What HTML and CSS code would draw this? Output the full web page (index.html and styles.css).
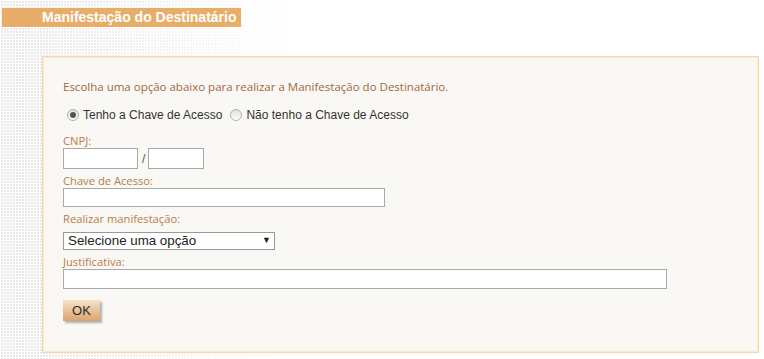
FILE: index.html
```html
<!DOCTYPE HTML><html>
<head>
  <title>Manifestação do Destinatário</title>
  <meta charset="utf-8">
  <meta name="viewport" content="width=device-width, initial-scale=1">
  <link rel="stylesheet" href="styles.css">
</head>
<body>
  <div class="topbar">
    <h1>Manifestação do Destinatário</h1>
  </div>
  <div class="panel">
    <p class="intro">Escolha uma opção abaixo para realizar a Manifestação do Destinatário.</p>
    <div class="radios">
      <label class="radio"><input type="radio" name="chave" checked> Tenho a Chave de Acesso</label>
      <label class="radio"><input type="radio" name="chave"> Não tenho a Chave de Acesso</label>
    </div>
    <div class="field">
      <label class="lbl">CNPJ:</label>
      <div class="cnpj">
        <input type="text" class="input cnpj-a">
        <span class="slash">/</span>
        <input type="text" class="input cnpj-b">
      </div>
    </div>
    <div class="field">
      <label class="lbl">Chave de Acesso:</label>
      <input type="text" class="input chave">
    </div>
    <div class="field">
      <label class="lbl lbl-select">Realizar manifestação:</label>
      <span class="select-wrap">
        <select class="select">
          <option>Selecione uma opção</option>
        </select>
      </span>
    </div>
    <div class="field">
      <label class="lbl">Justificativa:</label>
      <input type="text" class="input justif">
    </div>
    <button class="button">OK</button>
  </div>
</body>
</html>
```

FILE: styles.css
```css
html {
  font-family: "Liberation Sans", Arial, sans-serif;
}
body {
  margin: 0;
  height: 359px;
  overflow: hidden;
  background-color: #e8e8e8;
  background-image:
    linear-gradient(to right, rgba(255,255,255,0) 0, rgba(255,255,255,0) 25px, #fff 300px),
    linear-gradient(90deg, #fff 1px, transparent 1px),
    linear-gradient(#fff 1px, transparent 1px);
  background-size: 100% 100%, 3px 3px, 3px 3px;
}
.topbar {
  margin: 8px 0 0 2px;
  width: 199px;
  height: 19px;
  padding-left: 40px;
  background-color: #e8ad69;
}
h1 {
  margin: 0;
  font-size: 14px;
  line-height: 19px;
  color: #fff;
  font-weight: bold;
}
.panel {
  margin: 29px 0 0 42px;
  width: 675px;
  height: 273px;
  padding: 22px 20px 0 20px;
  background-color: #faf8f4;
  border: 1px solid #f6d9aa;
  box-shadow: inset 0 0 0 1px #fbe9cc;
}
.intro {
  margin: 0;
  font-family: "Open Sans", sans-serif;
  font-size: 11.5px;
  line-height: 15px;
  color: #a0693c;
}
.radios {
  margin-top: 14px;
  height: 14px;
  display: flex;
  align-items: center;
  gap: 8px;
  font-size: 12px;
  color: #333;
  padding-left: 4px;
}
.radio {
  display: flex;
  align-items: center;
  gap: 4px;
}
.radio input {
  -webkit-appearance: none;
  appearance: none;
  margin: 0;
  width: 12px;
  height: 12px;
  border-radius: 50%;
  border: 1px solid #b0b0b0;
  background: linear-gradient(#e2e2e2, #fdfdfd);
  position: relative;
}
.radio input:checked::after {
  content: "";
  position: absolute;
  left: 2px;
  top: 2px;
  width: 6px;
  height: 6px;
  border-radius: 50%;
  background: #555;
}
.field {
  margin-top: 12px;
}
.field + .field {
  margin-top: 5px;
}
.lbl {
  display: block;
  font-family: "Open Sans", sans-serif;
  font-size: 11.2px;
  line-height: 14px;
  color: #b57e48;
}
.lbl-select {
  margin-bottom: 5px;
}
.cnpj {
  display: flex;
  align-items: center;
}
.input {
  display: block;
  box-sizing: border-box;
  margin: 0;
  padding: 0 2px;
  border: 1px solid #a9a9a9;
  background: #fff;
  font-size: 13px;
}
.cnpj-a {
  width: 75px;
  height: 21px;
}
.slash {
  margin: 0 3px 0 4px;
  font-size: 12px;
  color: #555;
}
.cnpj-b {
  width: 56px;
  height: 21px;
}
.chave {
  width: 322px;
  height: 19px;
}
.select-wrap {
  display: inline-block;
  position: relative;
}
.select-wrap::after {
  content: "\25BC";
  position: absolute;
  right: 4px;
  top: 3px;
  font-size: 9px;
  color: #222;
  pointer-events: none;
}
.select {
  -webkit-appearance: none;
  appearance: none;
  display: block;
  width: 212px;
  height: 18px;
  margin: 0;
  padding: 0 0 0 4px;
  border: 1px solid #999;
  border-radius: 0;
  background: #fff;
  font-family: "Liberation Sans", Arial, sans-serif;
  font-size: 13.33px;
  color: #222;
}
.justif {
  width: 604px;
  height: 20px;
}
.button {
  display: block;
  margin-top: 11px;
  width: 37px;
  height: 21px;
  padding: 0;
  font-family: "Liberation Sans", Arial, sans-serif;
  font-size: 13px;
  color: #2b2b2b;
  border: none;
  background: linear-gradient(#f6e2c8, #dba46b);
  box-shadow: 2px 2px 2px rgba(0,0,0,.3);
}
```
